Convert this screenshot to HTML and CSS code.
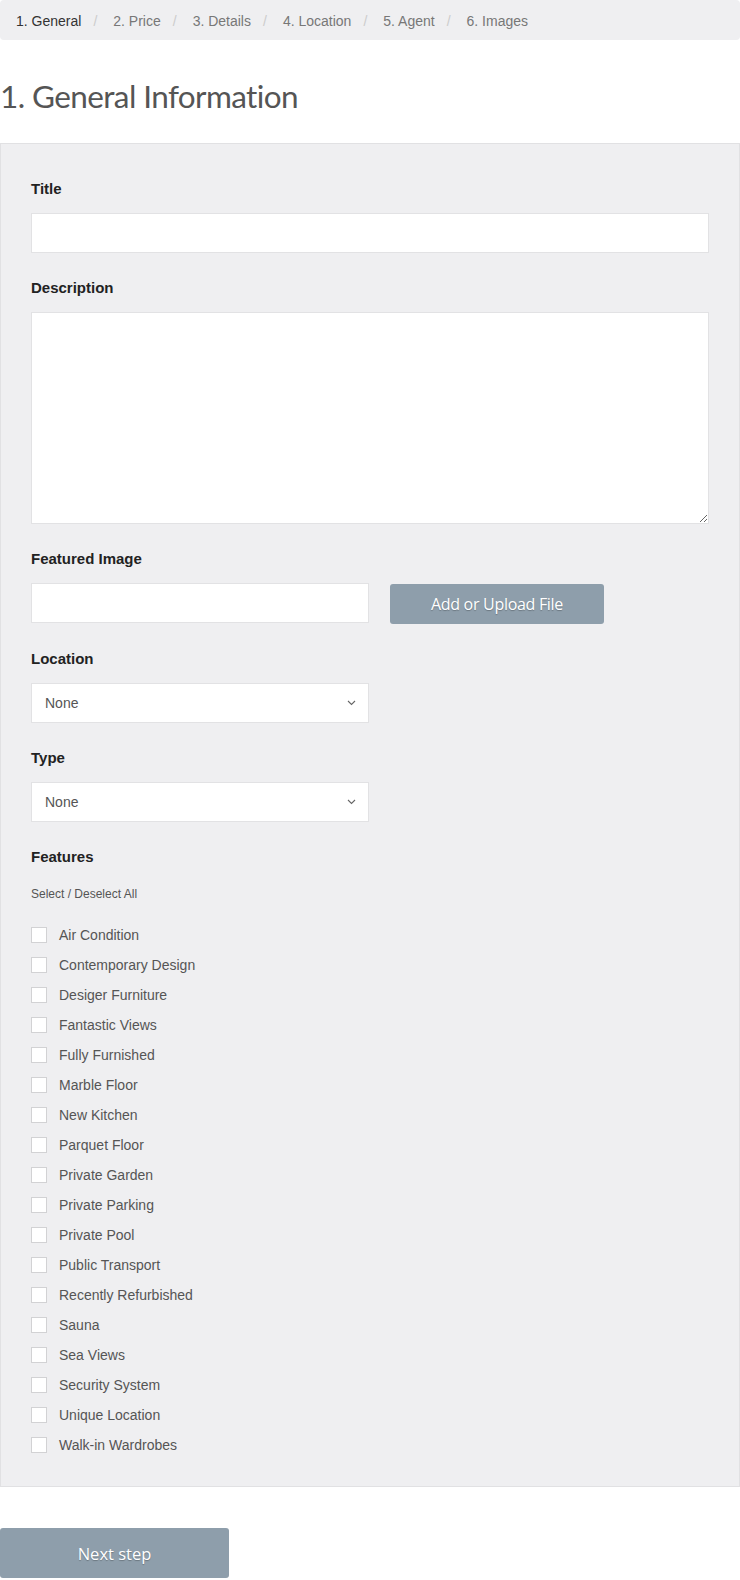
FILE: index.html
```html
<!DOCTYPE html>
<html lang="en">
<head>
<meta charset="utf-8">
<title>Submit Property - General</title>
<link rel="stylesheet" href="styles.css">
</head>
<body>
<div class="page">
  <nav class="crumbs">
    <span class="crumb active">1. General</span><span class="sep">/</span>
    <span class="crumb">2. Price</span><span class="sep">/</span>
    <span class="crumb">3. Details</span><span class="sep">/</span>
    <span class="crumb">4. Location</span><span class="sep">/</span>
    <span class="crumb">5. Agent</span><span class="sep">/</span>
    <span class="crumb">6. Images</span>
  </nav>

  <h1 class="page-title">1. General Information</h1>

  <form class="panel">
    <div class="group">
      <label class="label">Title</label>
      <input class="field" type="text">
    </div>
    <div class="group">
      <label class="label">Description</label>
      <textarea class="field area"></textarea>
    </div>
    <div class="group">
      <label class="label">Featured Image</label>
      <div class="upload-row">
        <input class="field" type="text">
        <button type="button" class="btn upload">Add or Upload File</button>
      </div>
    </div>
    <div class="group">
      <label class="label">Location</label>
      <div class="select half">
        <span class="select-value">None</span>
        <svg class="chev" width="9" height="6" viewBox="0 0 9 6"><path d="M1 1l3.5 3.5L8 1" fill="none" stroke="#666" stroke-width="1.1"/></svg>
      </div>
    </div>
    <div class="group">
      <label class="label">Type</label>
      <div class="select half">
        <span class="select-value">None</span>
        <svg class="chev" width="9" height="6" viewBox="0 0 9 6"><path d="M1 1l3.5 3.5L8 1" fill="none" stroke="#666" stroke-width="1.1"/></svg>
      </div>
    </div>
    <div class="group last">
      <label class="label">Features</label>
      <div class="select-all">Select / Deselect All</div>
      <ul class="checks">
        <li class="check"><input type="checkbox" class="box"><span>Air Condition</span></li>
        <li class="check"><input type="checkbox" class="box"><span>Contemporary Design</span></li>
        <li class="check"><input type="checkbox" class="box"><span>Desiger Furniture</span></li>
        <li class="check"><input type="checkbox" class="box"><span>Fantastic Views</span></li>
        <li class="check"><input type="checkbox" class="box"><span>Fully Furnished</span></li>
        <li class="check"><input type="checkbox" class="box"><span>Marble Floor</span></li>
        <li class="check"><input type="checkbox" class="box"><span>New Kitchen</span></li>
        <li class="check"><input type="checkbox" class="box"><span>Parquet Floor</span></li>
        <li class="check"><input type="checkbox" class="box"><span>Private Garden</span></li>
        <li class="check"><input type="checkbox" class="box"><span>Private Parking</span></li>
        <li class="check"><input type="checkbox" class="box"><span>Private Pool</span></li>
        <li class="check"><input type="checkbox" class="box"><span>Public Transport</span></li>
        <li class="check"><input type="checkbox" class="box"><span>Recently Refurbished</span></li>
        <li class="check"><input type="checkbox" class="box"><span>Sauna</span></li>
        <li class="check"><input type="checkbox" class="box"><span>Sea Views</span></li>
        <li class="check"><input type="checkbox" class="box"><span>Security System</span></li>
        <li class="check"><input type="checkbox" class="box"><span>Unique Location</span></li>
        <li class="check"><input type="checkbox" class="box"><span>Walk-in Wardrobes</span></li>
      </ul>
    </div>
  </form>

  <button type="button" class="btn next">Next step</button>
</div>
</body>
</html>
```

FILE: styles.css
```css
* { box-sizing: border-box; }
html, body { margin: 0; padding: 0; background: #fff; }
body {
  font-family: "Liberation Sans", Arial, sans-serif;
  color: #333;
  width: 740px;
}
.page { width: 740px; }

.crumbs {
  display: flex;
  align-items: center;
  height: 40px;
  padding: 11px 16px 9px;
  background: #efeff1;
  border-radius: 4px;
  font-size: 14px;
  line-height: 20px;
  color: #777;
}
.crumb.active { color: #333; }
.sep { color: #ccc; padding: 0 16px 0 12px; }

.page-title {
  margin: 36px 0 27px;
  font-family: Lato, "Open Sans", sans-serif;
  font-weight: 400;
  font-size: 31.5px;
  line-height: 40px;
  letter-spacing: -0.6px;
  font-variant-ligatures: none;
  color: #555;
}

.panel {
  display: block;
  background: #efeff1;
  border: 1px solid #e1e1e3;
  padding: 35px 30px 26px;
}
.group { margin-bottom: 25px; }
.group.last { margin-bottom: 0; }
.label {
  display: block;
  font-weight: 700;
  font-size: 15px;
  line-height: 20px;
  color: #222;
  margin-bottom: 14px;
}
.field {
  display: block;
  width: 100%;
  height: 40px;
  margin: 0;
  background: #fff;
  border: 1px solid #e2e2e4;
  border-radius: 0;
  font: 14px "Liberation Sans", Arial, sans-serif;
  outline: none;
}
.field.area { height: 212px; resize: vertical; }

.upload-row {
  display: grid;
  grid-template-columns: 338px 214px;
  column-gap: 21px;
  align-items: start;
}
.btn {
  border: 0;
  border-radius: 3px;
  background: #8e9eab;
  color: #fff;
  font-family: "Open Sans", "Noto Sans", sans-serif;
  text-shadow: 0 1px 1px rgba(0,0,0,0.25);
  cursor: pointer;
}
.upload {
  height: 40px;
  margin-top: 1px;
  font-size: 16px;
  letter-spacing: -0.3px;
}

.select {
  display: flex;
  align-items: center;
  justify-content: space-between;
  height: 40px;
  padding: 0 12px 0 13px;
  background: #fff;
  border: 1px solid #e2e2e4;
  font-size: 14px;
  color: #555;
}
.select.half { width: 338px; }
.chev { display: block; }

.select-all {
  font-size: 12px;
  line-height: 26px;
  color: #555;
  margin-bottom: 13px;
}
.checks { list-style: none; margin: 0; padding: 0; }
.check {
  display: flex;
  align-items: center;
  height: 30px;
  font-size: 14px;
  color: #555;
}
.box {
  appearance: none;
  -webkit-appearance: none;
  width: 16px;
  height: 16px;
  margin: 0 12px 0 0;
  background: #fff;
  border: 1px solid #d2d2d4;
  border-radius: 0;
  flex: none;
}

.next {
  display: block;
  margin-top: 41px;
  width: 229px;
  height: 50px;
  font-size: 16.5px;
}
```
